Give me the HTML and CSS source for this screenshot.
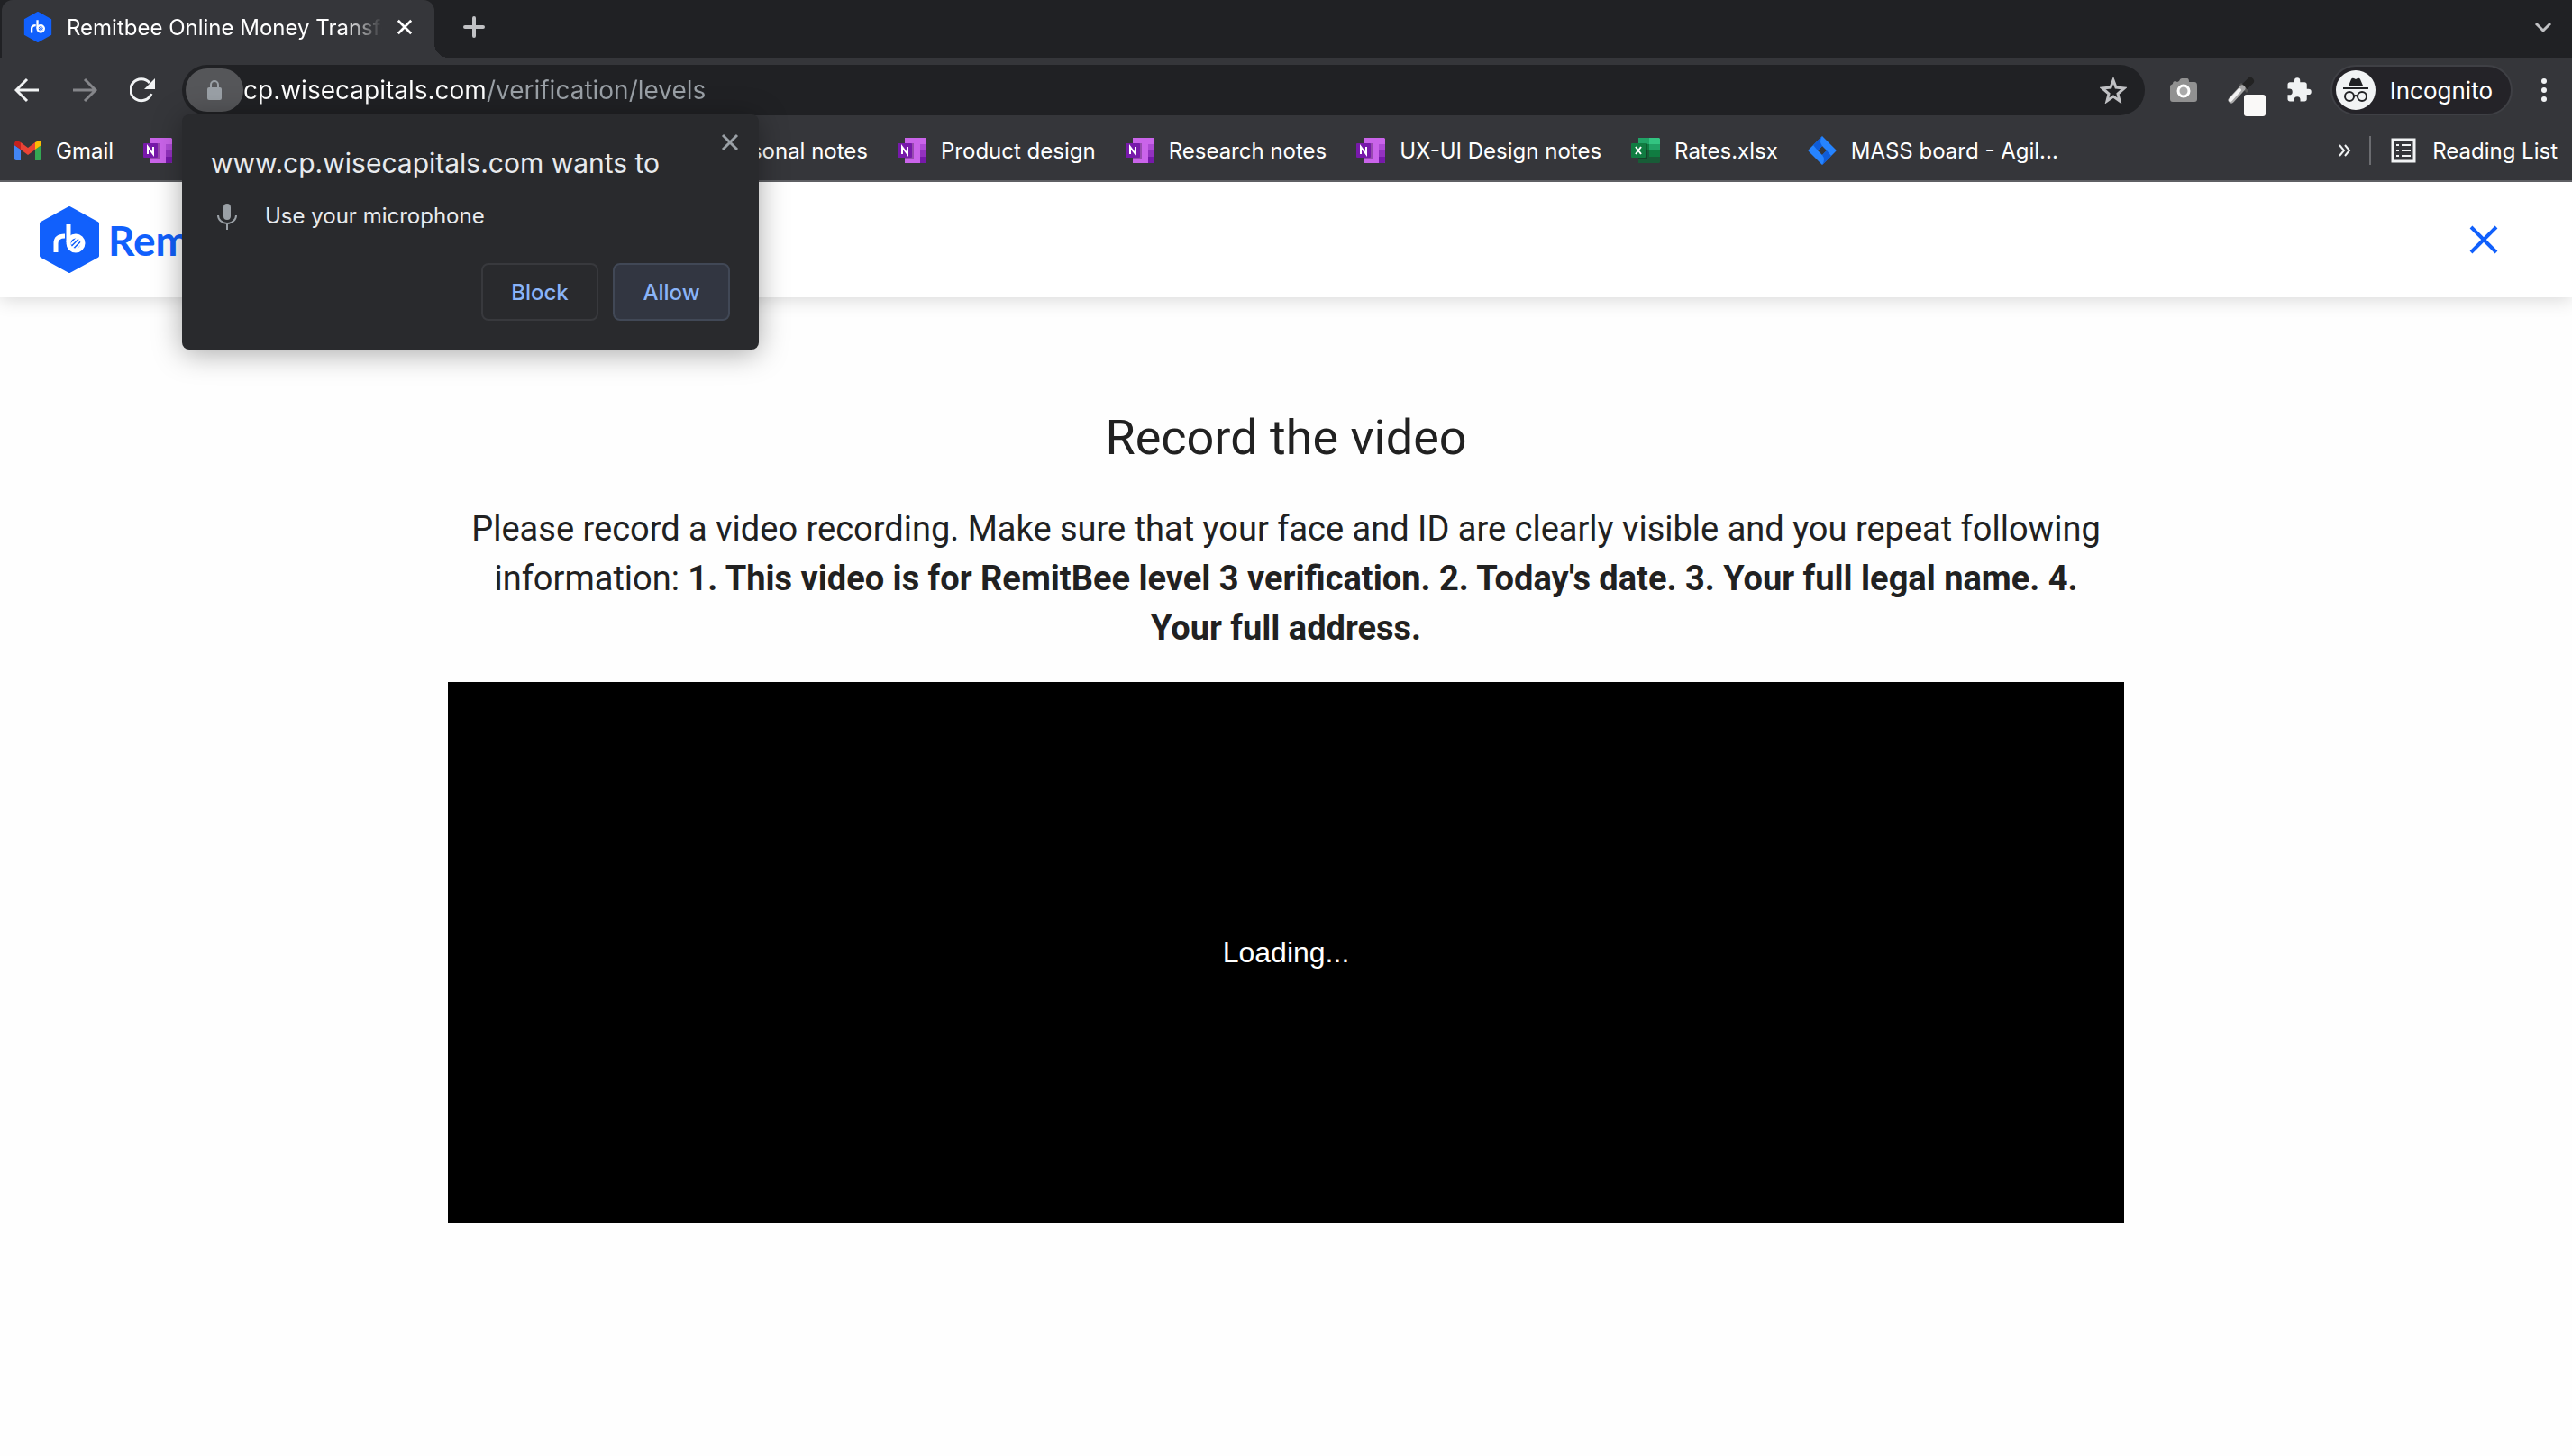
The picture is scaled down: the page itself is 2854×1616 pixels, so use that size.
FILE: index.html
```html
<!DOCTYPE html>
<html lang="en">

<head>
  <meta charset="UTF-8" />
  <title>Remitbee Online Money Transfer</title>
  <meta name="viewport" content="width=device-width, initial-scale=1.0" />
  <link rel="stylesheet" href="styles.css">
</head>

<body>
  <!-- shared icons -->
  <svg class="sprite" aria-hidden="true">
    <symbol id="onenote" viewBox="0 0 32 28">
      <path fill="#ca64ea" d="M8 0h23l1 1v26l-1 1H8z" />
      <path fill="#ae4bd5" d="M25 7h7v7h-7z" />
      <path fill="#9332bf" d="M25 14h7v7h-7z" />
      <path fill="#7719aa" d="M25 21h7v6l-1 1h-6z" />
      <path fill="#000" opacity=".25" d="M8 6h10v18H8z" />
      <rect y="6" width="16" height="16" rx="1" fill="#7719aa" />
      <path fill="none" stroke="#fff" stroke-width="2" d="M5 18v-8l6 8v-8" />
    </symbol>
    <symbol id="close" viewBox="0 0 20 20">
      <path fill="none" stroke="currentColor" stroke-width="3" d="M2 2l16 16M18 2L2 18" />
    </symbol>
    <symbol id="bee" viewBox="0 0 66 74">
      <path fill="#1160fc" stroke="#1160fc" stroke-width="4" stroke-linejoin="round" d="M33 2l31 17v36L33 72 2 55V19z" />
      <path fill="none" stroke="#fff" stroke-width="5" d="M18 51V41q0-8 10-8M32 20v20" />
      <circle cx="40" cy="41" r="8" fill="none" stroke="#fff" stroke-width="5" />
      <path fill="none" stroke="#fff" stroke-width="2" d="M35 42l8-8M36 46l10-10M40 47l7-7" />
    </symbol>
  </svg>

  <div class="browser">
    <div class="tab-strip">
      <div class="tab">
        <svg class="favicon"><use href="#bee" /></svg>
        <span class="tab-title">Remitbee Online Money Transfer</span>
        <button class="icon-button tab-close" type="button" aria-label="Close tab"><svg><use href="#close" /></svg></button>
      </div>
      <button class="icon-button new-tab" type="button" aria-label="New tab">
        <svg width="24" height="24" viewBox="0 0 24 24"><path stroke="#c0c1c4" stroke-width="4" stroke-linecap="round" d="M12 2v20M2 12h20" /></svg>
      </button>
      <button class="icon-button tab-search" type="button" aria-label="Search tabs">
        <svg width="20" height="14" viewBox="0 0 20 14"><path fill="none" stroke="#c0c1c4" stroke-width="3" d="M2 2l8 8 8-8" /></svg>
      </button>
    </div>

    <div class="toolbar">
      <div class="nav-buttons">
        <button class="icon-button" type="button" aria-label="Back">
          <svg width="28" height="28" viewBox="0 0 28 28"><path fill="none" stroke="#f1f3f4" stroke-width="3" d="M27 14H3M14 2L2 14l12 12" /></svg>
        </button>
        <button class="icon-button" type="button" aria-label="Forward">
          <svg width="28" height="28" viewBox="0 0 28 28"><path fill="none" stroke="#85868a" stroke-width="3" d="M1 14h24M14 2l12 12-12 12" /></svg>
        </button>
        <button class="icon-button" type="button" aria-label="Reload">
          <svg width="28" height="28" viewBox="0 0 28 28"><path fill="none" stroke="#f1f3f4" stroke-width="3" d="M24 18A12 12 0 1 1 22 6" /><path fill="#f1f3f4" d="M28 1v12H16z" /></svg>
        </button>
      </div>

      <div class="omnibox">
        <button class="icon-button site-chip" type="button" aria-label="View site information">
          <svg width="18" height="22" viewBox="0 0 18 22"><rect x="1" y="8" width="16" height="14" rx="2" fill="#9aa0a6" /><path fill="none" stroke="#9aa0a6" stroke-width="2" d="M5 9V5a4 4 0 0 1 8 0v4" /></svg>
        </button>
        <input class="url" type="text" aria-label="Address" value="cp.wisecapitals.com/verification/levels" />
        <button class="icon-button" type="button" aria-label="Bookmark this page">
          <svg width="30" height="30" viewBox="0 0 30 30"><path fill="none" stroke="#c0c1c4" stroke-width="3" d="M15 4l3 8 9 1-7 6 2 8-7-5-7 5 2-8-7-6 9-1z" /></svg>
        </button>
      </div>

      <div class="extensions">
        <button class="icon-button" type="button" aria-label="Screenshot extension">
          <svg width="30" height="28" viewBox="0 0 30 28"><path fill="#919191" d="M3 7q0-3 3-3l2 1 2-1q1-3 3-3h6q2 0 2 4h6q3 0 3 4v15q0 3-3 3H3q-3 0-3-3V9z" /><circle cx="15" cy="15" r="6" fill="#aaa" stroke="#fff" stroke-width="3" /></svg>
        </button>
        <button class="icon-button picker" type="button" aria-label="Color picker extension">
          <svg width="42" height="44" viewBox="0 0 42 44"><path stroke="#222" stroke-width="8" stroke-linecap="round" d="M19 11l6-6" /><path stroke="#555" stroke-width="3" d="M14 8l8 9" /><path stroke="#aaa" stroke-width="7" stroke-linecap="round" d="M4 26l12-13" /><path stroke="#f4f4f4" stroke-width="4" stroke-linecap="round" d="M3 26l10-11" /><rect x="18" y="20" width="24" height="24" rx="3" fill="#faf9f8" /></svg>
        </button>
        <button class="icon-button" type="button" aria-label="Extensions">
          <svg width="30" height="30" viewBox="0 0 24 24"><path fill="#f1f3f4" d="M20.500 11H19V7c0-1.100-.9-2-2-2h-4V3.500a2.500 2.500 0 0 0-5 0V5H4c-1.100 0-2 .9-2 2v3.800h1.500a2.700 2.700 0 0 1 0 5.400H2V20c0 1.100.9 2 2 2h3.800v-1.500a2.700 2.700 0 0 1 5.400 0V22H17c1.100 0 2-.9 2-2v-4h1.500a2.500 2.500 0 0 0 0-5z" /></svg>
        </button>
      </div>

      <button class="profile" type="button">
        <svg width="44" height="44" viewBox="0 0 44 44"><circle cx="22" cy="22" r="22" fill="#f1f3f4" /><path fill="#202124" d="M14 17l3-7q1-2 3-1l2 1 2-1q2-1 3 1l3 7zM8 19h28v2H8z" /><g fill="none" stroke="#202124" stroke-width="2"><circle cx="15" cy="29" r="5" /><circle cx="29" cy="29" r="5" /><path d="M20 29q2-2 4 0" /></g></svg>
        Incognito
      </button>
      <button class="icon-button menu" type="button" aria-label="Menu">
        <svg width="6" height="28" viewBox="0 0 6 28"><g fill="#f1f3f4"><circle cx="3" cy="4" r="3" /><circle cx="3" cy="14" r="3" /><circle cx="3" cy="24" r="3" /></g></svg>
      </button>
    </div>

    <nav class="bookmarks">
      <a class="bookmark gmail" href="#">
        <svg width="30" height="22" viewBox="0 0 30 22"><path fill="#4285f4" d="M0 5l7 5v12H2q-2 0-2-2z" /><path fill="#34a853" d="M30 5l-7 5v12h5q2 0 2-2z" /><path fill="#ea4335" d="M7 2l8 6 8-6v8l-8 6-8-6z" /><path fill="#c5221f" d="M0 3q1-4 5-2l2 1v8L0 5z" /><path fill="#fbbc04" d="M30 3q-1-4-5-2l-2 1v8l7-5z" /></svg>
        Gmail
      </a>
      <a class="bookmark covered" href="#"><svg><use href="#onenote" /></svg>Personal notes</a>
      <a class="bookmark" href="#"><svg><use href="#onenote" /></svg>Product design</a>
      <a class="bookmark" href="#"><svg><use href="#onenote" /></svg>Research notes</a>
      <a class="bookmark" href="#"><svg><use href="#onenote" /></svg>UX-UI Design notes</a>
      <a class="bookmark" href="#">
        <svg viewBox="0 0 32 28"><path fill="#21a366" d="M8 0h12v7H8z" /><path fill="#33c481" d="M20 0h11l1 1v6H20z" /><path fill="#107c41" d="M8 7h12v7H8z" /><path fill="#21a366" d="M20 7h12v7H20z" /><path fill="#185c37" d="M8 14h12v7H8z" /><path fill="#107c41" d="M20 14h12v7H20z" /><path fill="#185c37" d="M8 21h24v6l-1 1H8z" /><path opacity=".25" d="M8 6h10v18H8z" /><rect y="6" width="16" height="16" rx="1" fill="#107c41" /><path stroke="#fff" stroke-width="2" d="M5 10l6 8M11 10l-6 8" /></svg>
        Rates.xlsx
      </a>
      <a class="bookmark jira" href="#">
        <svg viewBox="0 0 32 32"><path fill="#2684ff" d="M16 0l15 15q1 1 0 2L16 32 1 17q-1-1 0-2zM16 11l-5 5 5 5 5-5z" fill-rule="evenodd" /><path fill="#0f5cd8" d="M16 0q-4 6 0 11l-5 5-5-6zM16 32q4-6 0-11l5-5 5 6z" /></svg>
        MASS board - Agil...
      </a>
      <div class="bookmarks-end">
        <button class="icon-button" type="button" aria-label="More bookmarks">
          <svg width="14" height="14" viewBox="0 0 14 14"><path fill="none" stroke="#f1f3f4" stroke-width="2" d="M1 1l5 6-5 6M7 1l5 6-5 6" /></svg>
        </button>
        <a class="reading-list" href="#">
          <svg width="28" height="28" viewBox="0 0 28 28"><path fill="none" stroke="#f1f3f4" stroke-width="3" d="M2 2h24v24H2z" /><path stroke="#f1f3f4" stroke-width="2" d="M6 8h3M12 8h10M6 14h3M12 14h10M6 20h3M12 20h10" /></svg>
          Reading List
        </a>
      </div>
    </nav>

    <div class="permission" role="dialog" aria-labelledby="permission-title">
      <button class="icon-button permission-close" type="button" aria-label="Close"><svg><use href="#close" /></svg></button>
      <h2 id="permission-title">www.cp.wisecapitals.com wants to</h2>
      <p class="permission-item">
        <svg width="24" height="30" viewBox="0 0 24 30"><rect x="8" y="1" width="8" height="18" rx="4" fill="#9aa0a6" /><path fill="none" stroke="#9aa0a6" stroke-width="2" d="M2 14a10 9 0 0 0 20 0M12 23v7" /></svg>
        Use your microphone
      </p>
      <div class="permission-actions">
        <button type="button">Block</button>
        <button class="allow" type="button">Allow</button>
      </div>
    </div>
  </div>

  <header class="site-header">
    <a class="brand" href="#"><svg><use href="#bee" /></svg>Remitbee</a>
    <button class="icon-button site-close" type="button" aria-label="Close"><svg width="32" height="32" viewBox="0 0 32 32"><path stroke="#1160fc" stroke-width="4" d="M2 2l28 28M30 2L2 30" /></svg></button>
  </header>

  <main class="content">
    <h1>Record the video</h1>
    <p>Please record a video recording. Make sure that your face and ID are clearly visible and you repeat following information: <strong>1. This video is for RemitBee level 3 verification. 2. Today's date. 3. Your full legal name. 4. Your full address.</strong></p>
    <div class="video">Loading...</div>
  </main>
</body>

</html>
```
FILE: styles.css
```css
:root {
  --chrome: #35363a;
  --chrome-dark: #202124;
  --popup: #292a2d;
  --brand: #1160fc;
  --link: #8ab4f8;
}

* {
  box-sizing: border-box;
}

body {
  margin: 0;
  background: #fefefe;
  color: #212121;
  font-family: Roboto, sans-serif;
}

svg {
  display: block;
  flex-shrink: 0;
}

button {
  font: inherit;
  cursor: pointer;
}

a {
  color: inherit;
  text-decoration: none;
}

.sprite {
  position: absolute;
  width: 0;
  height: 0;
}

.icon-button {
  display: flex;
  align-items: center;
  justify-content: center;
  padding: 0;
  border: none;
  background: none;
}

/* Browser chrome */
.browser {
  position: relative;
  background: var(--chrome);
  border-bottom: 2px solid #5f6064;
  color: #fff;
  font-family: Inter, sans-serif;
  font-size: 24px;
}

.tab-strip {
  display: flex;
  height: 64px;
  padding: 0 22px 0 2px;
  background: var(--chrome-dark);
}

.tab {
  position: relative;
  display: flex;
  align-items: center;
  width: 480px;
  padding: 0 24px 4px;
  border-radius: 12px 12px 0 0;
  background: var(--chrome);
}

.tab::after {
  content: "";
  position: absolute;
  left: 100%;
  bottom: 0;
  width: 16px;
  height: 16px;
  background: radial-gradient(circle at 100% 0, transparent 16px, var(--chrome) 16px);
}

.favicon {
  width: 32px;
  height: 34px;
}

.tab-title {
  flex: 1;
  margin-left: 16px;
  overflow: hidden;
  white-space: nowrap;
  mask-image: linear-gradient(to right, #000 88%, transparent);
}

.tab-close {
  margin-left: 16px;
  color: #fff;
}

.tab-close svg {
  width: 18px;
  height: 18px;
}

.new-tab {
  margin: 0 auto 4px 32px;
}

.tab-search {
  margin-bottom: 2px;
}

.toolbar {
  display: flex;
  align-items: center;
  height: 72px;
  padding: 0 28px 0 16px;
}

.nav-buttons {
  display: flex;
  gap: 36px;
  width: 186px;
}

.omnibox {
  display: flex;
  flex: 1;
  align-items: center;
  height: 56px;
  padding: 0 20px 0 4px;
  border-radius: 28px;
  background: var(--chrome-dark);
}

.site-chip {
  width: 64px;
  height: 48px;
  border-radius: 24px;
  background: #555659;
}

/* domain in white, path in grey */
.url {
  flex: 1;
  height: 48px;
  padding: 0;
  border: none;
  outline: none;
  background: linear-gradient(to right, #fff 270px, #9aa0a6 270px);
  background-clip: text;
  color: transparent;
  font: inherit;
  font-size: 28px;
}

.extensions {
  display: flex;
  align-items: center;
  margin: 0 20px 0 28px;
}

.picker {
  margin: 14px 22px 0 34px;
}

.profile {
  display: flex;
  align-items: center;
  gap: 16px;
  height: 56px;
  padding: 0 20px 0 4px;
  border: 2px solid #3f4045;
  border-radius: 28px;
  background: #242328;
  color: #fff;
  font-size: 26px;
}

.menu {
  margin-left: 32px;
}

.bookmarks {
  display: flex;
  align-items: center;
  gap: 33px;
  height: 64px;
  padding: 0 16px 2px;
  white-space: nowrap;
}

.bookmark {
  display: flex;
  align-items: center;
  gap: 16px;
}

.bookmark svg {
  width: 32px;
  height: 28px;
}

.bookmark.gmail svg {
  width: 30px;
  height: 24px;
}

.bookmark.jira svg {
  height: 32px;
}

/* runs on behind the permission prompt */
.covered {
  justify-content: space-between;
  width: 804px;
}

.bookmarks-end {
  display: flex;
  align-items: center;
  gap: 20px;
  margin-left: auto;
}

.reading-list {
  display: flex;
  align-items: center;
  gap: 18px;
  height: 32px;
  padding-left: 22px;
  border-left: 2px solid #6b6c70;
}

/* Permission prompt */
.permission {
  position: absolute;
  top: 127px;
  left: 202px;
  width: 640px;
  padding: 36px 32px 32px;
  border-radius: 8px;
  background: var(--popup);
  box-shadow: 0 4px 32px rgba(0, 0, 0, 0.35);
  color: #e8eaed;
}

.permission h2 {
  margin: 0;
  font-size: 30px;
  font-weight: 400;
  line-height: 36px;
}

.permission-close {
  position: absolute;
  top: 21px;
  right: 22px;
  color: #9aa0a6;
}

.permission-close svg {
  width: 20px;
  height: 20px;
}

.permission-item {
  display: flex;
  align-items: center;
  gap: 30px;
  margin: 25px 0 36px;
  padding-left: 6px;
  line-height: 32px;
}

.permission-actions {
  display: flex;
  justify-content: flex-end;
  gap: 16px;
}

.permission-actions button {
  width: 130px;
  height: 64px;
  border: 2px solid #38393d;
  border-radius: 8px;
  background: var(--popup);
  color: var(--link);
  font-weight: 500;
}

.permission-actions .allow {
  border-color: #414856;
  background: #323641;
}

/* Page */
.site-header {
  display: flex;
  align-items: center;
  justify-content: space-between;
  height: 128px;
  padding: 0 82px 0 44px;
  background: #fff;
  box-shadow: 0 2px 20px rgba(0, 0, 0, 0.16);
}

.brand {
  display: flex;
  align-items: center;
  gap: 10px;
  color: var(--brand);
  font-family: Lato, sans-serif;
  font-size: 46px;
  font-weight: 700;
}

.brand svg {
  width: 66px;
  height: 74px;
}

.content {
  width: 66%;
  max-width: 1860px;
  margin: 0 auto;
  padding-top: 124px;
  text-align: center;
}

.content h1 {
  margin: 0;
  font-size: 54px;
  font-weight: 400;
  line-height: 64px;
}

.content p {
  margin: 42px 0 32px;
  padding: 0 16px;
  font-size: 38px;
  line-height: 55px;
}

.video {
  display: flex;
  align-items: center;
  justify-content: center;
  height: 600px;
  background: #000;
  color: #fff;
  font-family: "Liberation Sans", sans-serif;
  font-size: 32px;
}
```
